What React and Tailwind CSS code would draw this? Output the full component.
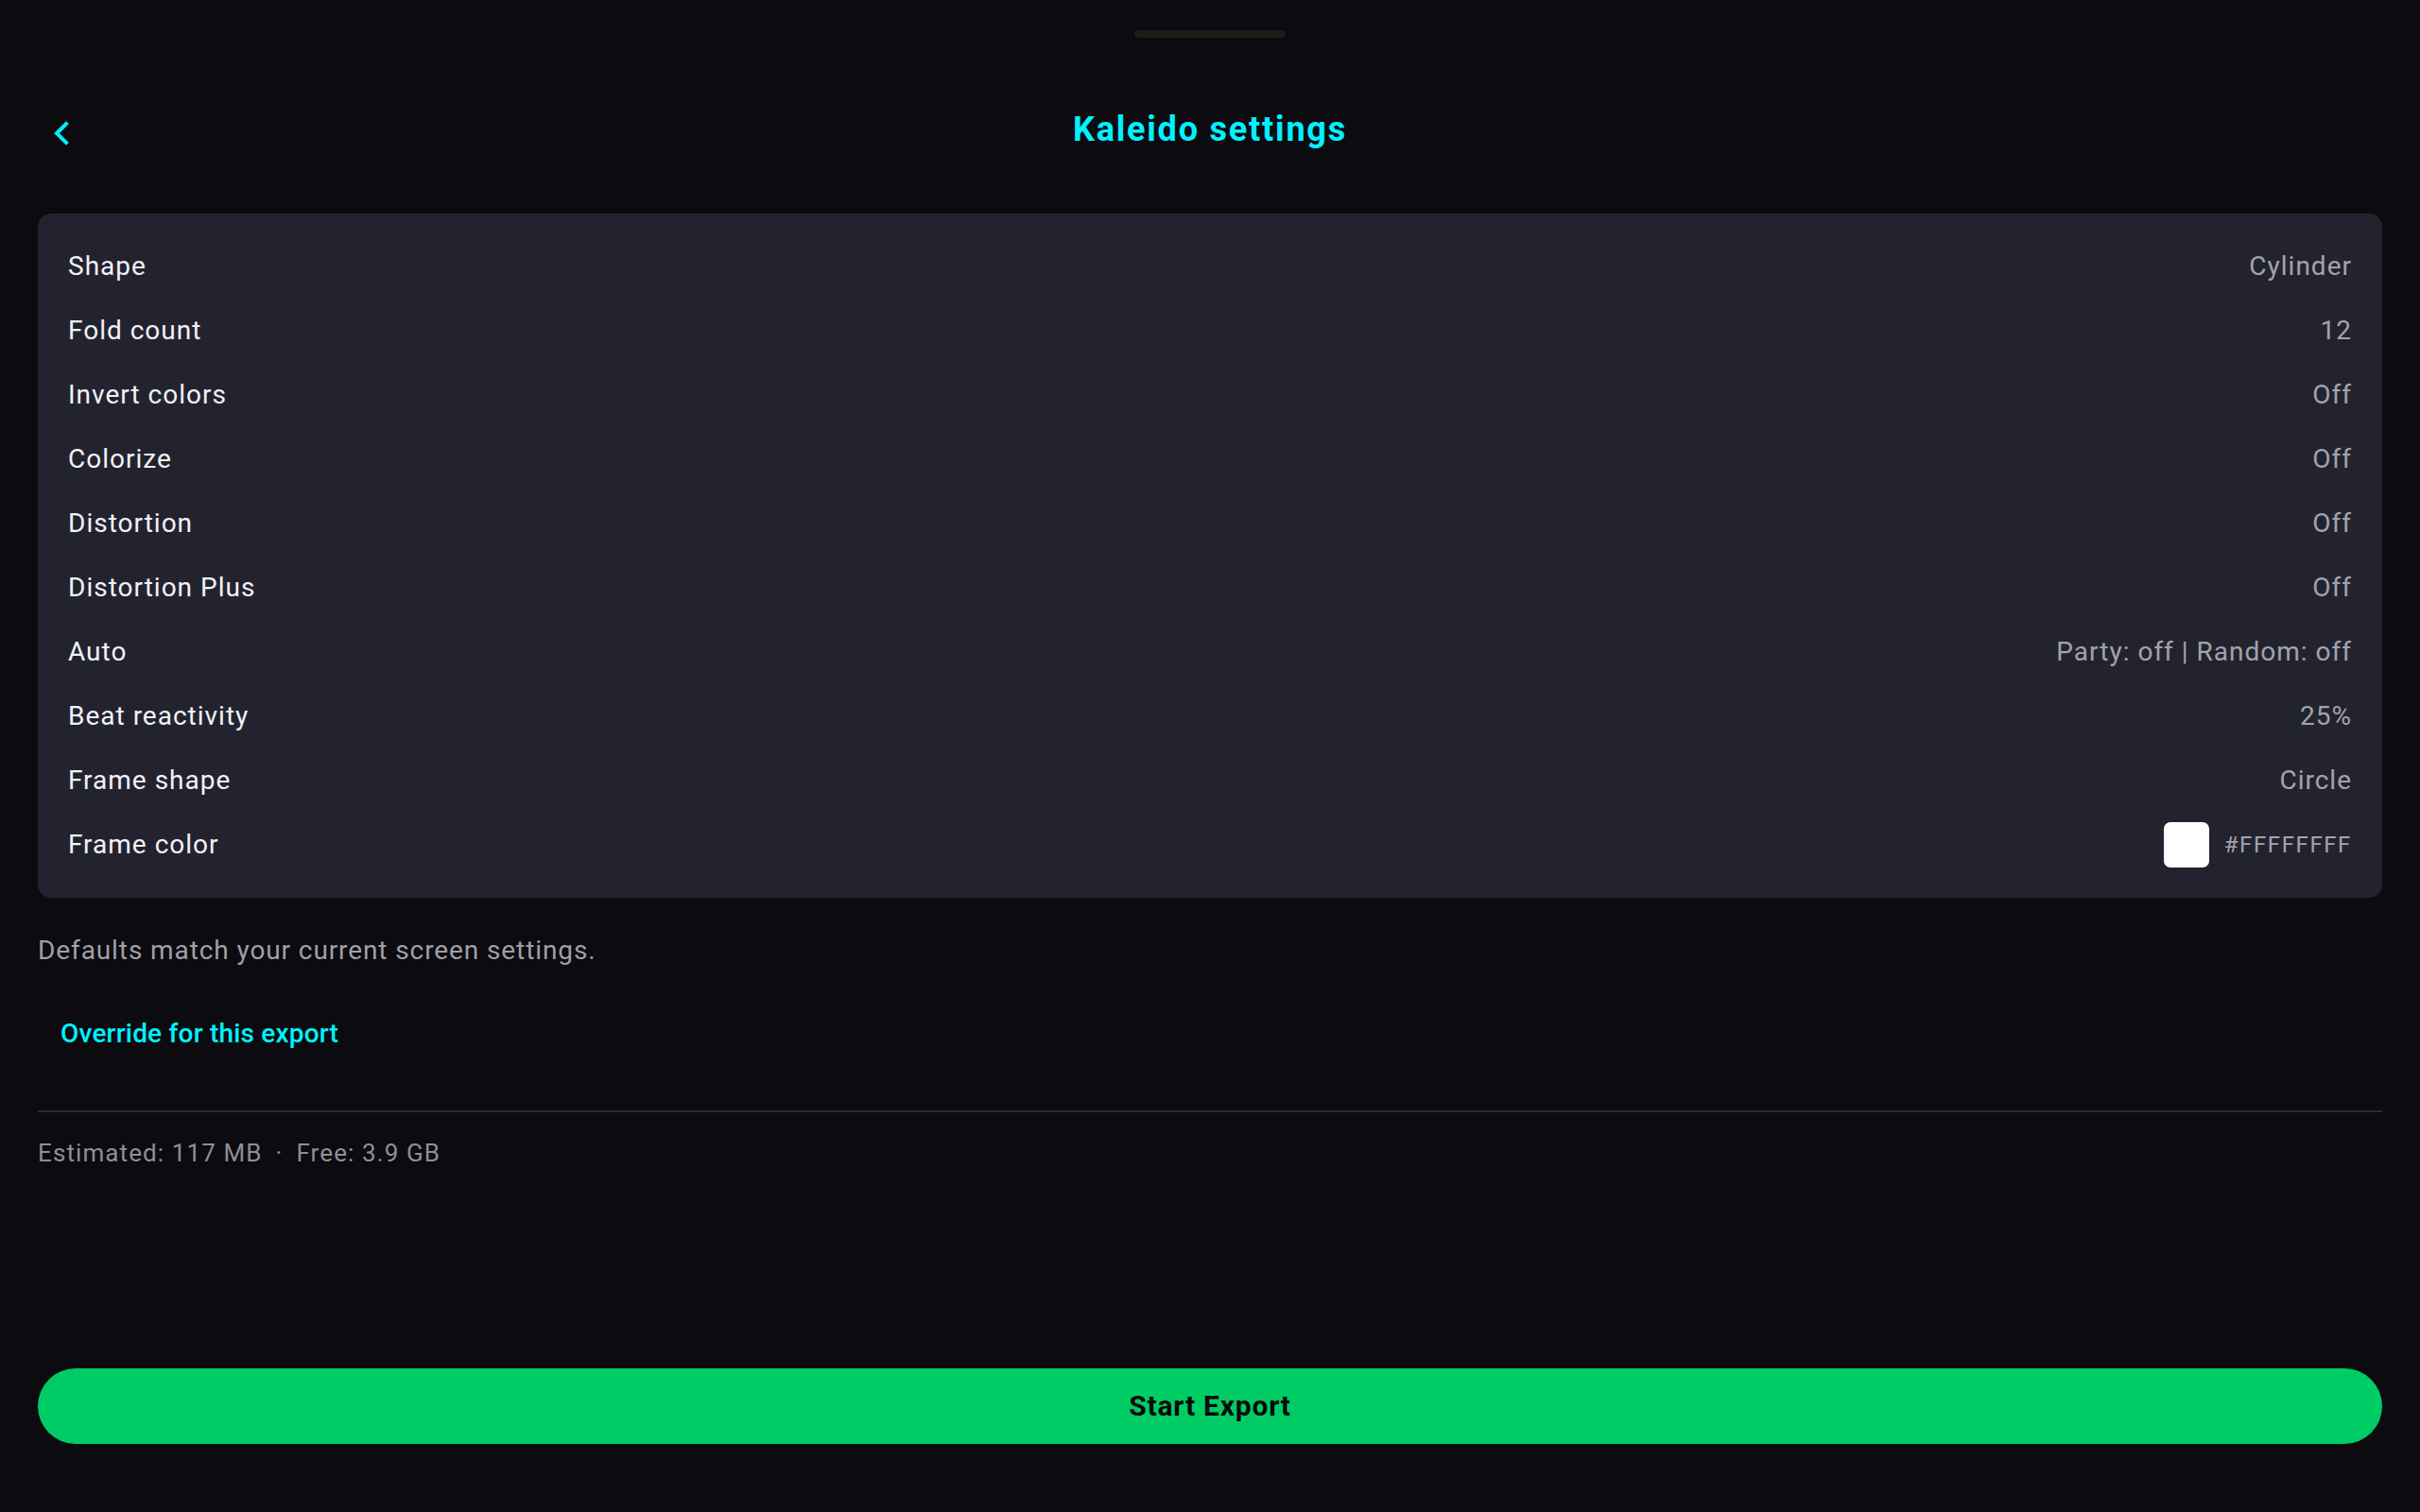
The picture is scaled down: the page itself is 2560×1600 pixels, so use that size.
import React from "react";

const rows = [
  ["Shape", "Cylinder"],
  ["Fold count", "12"],
  ["Invert colors", "Off"],
  ["Colorize", "Off"],
  ["Distortion", "Off"],
  ["Distortion Plus", "Off"],
  ["Auto", "Party: off | Random: off"],
  ["Beat reactivity", "25%"],
  ["Frame shape", "Circle"],
];

export default function App() {
  return (
    <div
      className="h-screen w-full bg-[#0b0b10] flex flex-col px-[40px] overflow-hidden"
      style={{ fontFamily: "Roboto, 'Noto Sans', sans-serif" }}
    >
      <div className="flex justify-center pt-[32px]">
        <div className="h-[8px] w-[160px] rounded-[4px] bg-[#1c1c19]" />
      </div>

      <div className="mt-[40px] h-[114px] grid grid-cols-[1fr_auto_1fr] items-center">
        <div className="flex items-center">
          <svg
            className="ml-[17px] mt-[8px]"
            width="16"
            height="26"
            viewBox="0 0 16 26"
            fill="none"
          >
            <polyline
              points="13,3 3,13 13,23"
              stroke="#00f0ff"
              strokeWidth="4"
              strokeLinecap="square"
              strokeLinejoin="miter"
            />
          </svg>
        </div>
        <div className="text-[36px] font-bold text-[#00f2ff] tracking-[1.8px] leading-[44px]">
          Kaleido settings
        </div>
        <div />
      </div>

      <div className="mt-[32px] rounded-[14px] bg-[#232330] px-[32px] py-[22px]">
        {rows.map(([label, value]) => (
          <div
            key={label}
            className="h-[68px] flex items-center justify-between"
          >
            <span className="text-[28px] text-[#f2f2f5] tracking-[1px] leading-[36px]">
              {label}
            </span>
            <span className="text-[28px] text-[#a3a3ab] tracking-[1px] leading-[36px]">
              {value}
            </span>
          </div>
        ))}
        <div className="h-[68px] flex items-center justify-between">
          <span className="text-[28px] text-[#f2f2f5] tracking-[1px] leading-[36px]">
            Frame color
          </span>
          <div className="flex items-center gap-[16px]">
            <div className="w-[48px] h-[48px] rounded-[7px] bg-white" />
            <span className="text-[24px] text-[#a3a3ab] tracking-[1.6px] leading-[32px]">
              #FFFFFFFF
            </span>
          </div>
        </div>
      </div>

      <div className="mt-[38px] text-[28px] text-[#a0a0a6] tracking-[0.9px] leading-[36px]">
        Defaults match your current screen settings.
      </div>

      <div className="mt-[36px] self-start px-[24px] py-[16px] text-[28px] font-medium text-[#00f2ff] tracking-[0.2px] leading-[36px]">
        Override for this export
      </div>

      <div className="mt-[47px] h-[2px] bg-[#2a2a32]" />

      <div className="mt-[26px] text-[26px] text-[#8f8f95] tracking-[1.1px] leading-[34px]">
        Estimated: 117 MB<span className="mx-[14px]">·</span>Free: 3.9 GB
      </div>

      <div className="flex-1" />

      <div className="mb-[72px] h-[80px] rounded-full bg-[#00cc66] flex items-center justify-center">
        <span className="text-[30px] font-bold text-[#0a0a0a] tracking-[0.8px] leading-[38px]">
          Start Export
        </span>
      </div>
    </div>
  );
}
